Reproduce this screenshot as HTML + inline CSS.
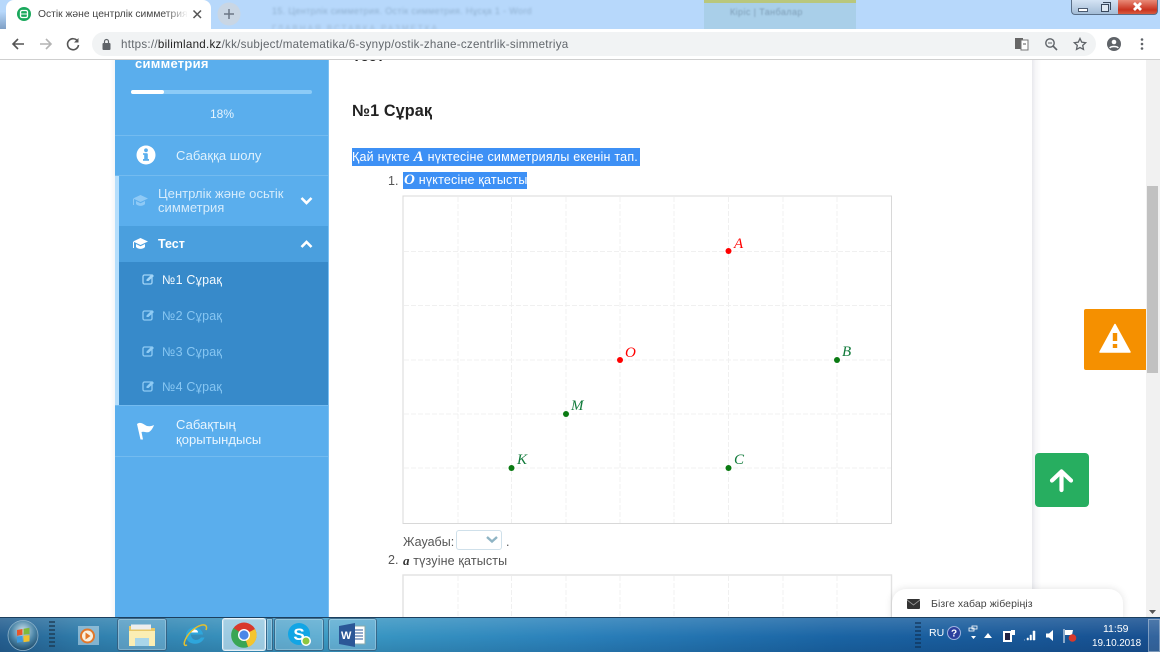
<!DOCTYPE html>
<html><head><meta charset="utf-8">
<style>
html,body{margin:0;padding:0}
body{width:1160px;height:652px;overflow:hidden;position:relative;background:#fff;font-family:"Liberation Sans",sans-serif;color:#333}
.a{position:absolute;white-space:nowrap}
.w{color:#fff}
.sb{font-size:13px;letter-spacing:.05px;line-height:14.5px}
.m{font-family:"Liberation Serif",serif;font-style:italic;font-weight:bold}
.btn{height:33px;top:618px;background:rgba(190,225,245,.3);border:1px solid rgba(20,50,80,.55);border-radius:3px;box-sizing:border-box;box-shadow:inset 0 0 0 1px rgba(255,255,255,.25)}
</style></head><body>
<!-- tab strip -->
<div class="a" style="left:0;top:0;width:1160px;height:29px;background:#b7d8fb"></div>
<div class="a" style="left:0;top:0;width:8px;height:29px;background:linear-gradient(#b7d8fb 40%,#7f9fc4)"></div>
<div class="a" style="left:272px;top:6px;font-size:9px;color:#90b0d0;filter:blur(1px);letter-spacing:.35px">15. Центрлік симметрия. Остік симметрия. Нұсқа 1 - Word</div>
<div class="a" style="left:272px;top:24px;font-size:8px;color:#9db9d6;filter:blur(1px);letter-spacing:2px">ГЛАВНАЯ ВСТАВКА РАЗМЕТКА</div>
<div class="a" style="left:704px;top:0;width:152px;height:29px;background:#a9cfe9"></div>
<div class="a" style="left:704px;top:0;width:152px;height:3px;background:#b9c77c"></div>
<div class="a" style="left:730px;top:7px;font-size:9px;letter-spacing:.4px;color:#7d9cb5;filter:blur(.9px)">Кіріс | Танбалар</div>
<div class="a" style="left:6px;top:0;width:205px;height:29px;background:#fff;border-radius:8px 8px 0 0"></div>
<svg class="a" style="left:17px;top:7px" width="14" height="14"><circle cx="7" cy="7" r="7" fill="#1aa85c"/><rect x="3.500" y="3.500" width="7" height="7" rx="1.500" fill="none" stroke="#fff" stroke-width="1.300"/><path d="M4 7h6" stroke="#fff"/></svg>
<div class="a" style="left:38px;top:8px;width:150px;overflow:hidden;font-size:10.300px;line-height:13px;color:#444;-webkit-mask-image:linear-gradient(90deg,#000 85%,transparent)">Остік және центрлік симметрия</div>
<svg class="a" style="left:192px;top:9px" width="11" height="11"><path d="M1.500 1.500l7.500 7.500M9 1.500L1.500 9" stroke="#555" stroke-width="1.500"/></svg>
<svg class="a" style="left:217px;top:2px" width="24" height="24"><circle cx="12" cy="12" r="11.500" fill="#c9d6e4"/><path d="M7 12h10M12 7v10" stroke="#6c7785" stroke-width="1.500"/></svg>
<!-- window buttons -->
<div class="a" style="left:1071px;top:0;width:48px;height:15px;background:linear-gradient(#d4e3f4,#a3bcd6);border:1px solid #5a6f88;border-top:0;border-right:0;border-radius:0 0 0 4px;box-sizing:border-box"></div>
<div class="a" style="left:1118px;top:0;width:40px;height:15px;background:linear-gradient(#e98a78,#c9331f 70%,#d85c40);border:1px solid #5a6f88;border-top:0;border-left:0;border-radius:0 0 4px 0;box-sizing:border-box"></div>
<div class="a" style="left:1078px;top:8px;width:10px;height:4px;background:#fff;border:1px solid #4a5a70;box-sizing:border-box"></div>
<div class="a" style="left:1101px;top:4px;width:8px;height:8px;border:1px solid #39485c;background:#dfe9f3;box-sizing:border-box"></div>
<div class="a" style="left:1103px;top:2px;width:8px;height:8px;border:1px solid #39485c;border-left:0;border-bottom:0;box-sizing:border-box"></div>
<svg class="a" style="left:1129px;top:1px" width="18" height="12"><path d="M5 2l7 7M12 2l-7 7" stroke="#fff" stroke-width="2.800"/></svg>
<!-- toolbar -->
<div class="a" style="left:0;top:29px;width:1160px;height:30px;background:#fff"></div>
<div class="a" style="left:0;top:59px;width:1160px;height:1px;background:#cfcfcf"></div>
<div class="a" style="left:92px;top:32px;width:1004px;height:24px;border-radius:12px;background:#f1f3f4"></div>
<svg class="a" style="left:10px;top:36px" width="16" height="16"><path d="M14 8H3M8 3L3 8l5 5" fill="none" stroke="#555" stroke-width="1.600"/></svg>
<svg class="a" style="left:38px;top:36px" width="16" height="16"><path d="M2 8h11M8 3l5 5-5 5" fill="none" stroke="#b4b4b4" stroke-width="1.600"/></svg>
<svg class="a" style="left:65px;top:36px" width="16" height="16"><path d="M12.500 5A5.500 5.500 0 1 0 13.500 9" fill="none" stroke="#555" stroke-width="1.600"/><path d="M13.500 2v4.500H9z" fill="#555"/></svg>
<svg class="a" style="left:101px;top:38px" width="12" height="13"><rect x="1.500" y="5" width="8" height="7" rx="1" fill="#5f6368"/><path d="M3.500 5V3.500a2 2 0 0 1 4 0V5" fill="none" stroke="#5f6368" stroke-width="1.200"/></svg>
<div class="a" style="left:121px;top:38px;font-size:11.600px;letter-spacing:.26px;color:#62676c">https://<span style="color:#222">bilimland.kz</span>/kk/subject/matematika/6-synyp/ostik-zhane-czentrlik-simmetriya</div>
<svg class="a" style="left:1015px;top:37px" width="14" height="14"><rect x="0" y="1" width="8" height="11" fill="#666"/><rect x="6" y="3" width="7" height="10" fill="#fff" stroke="#777"/><path d="M8 7h3" stroke="#555"/></svg>
<svg class="a" style="left:1044px;top:37px" width="14" height="14"><circle cx="6" cy="6" r="4.200" fill="none" stroke="#5f6368" stroke-width="1.400"/><path d="M9 9l4 4" stroke="#5f6368" stroke-width="1.600"/><path d="M4 6h4" stroke="#5f6368"/></svg>
<svg class="a" style="left:1073px;top:37px" width="14" height="14"><path d="M7 1.500l1.700 3.700 4 .5-3 2.700.8 4L7 10.500l-3.500 1.900.8-4-3-2.700 4-.5z" fill="none" stroke="#5f6368" stroke-width="1.300"/></svg>
<svg class="a" style="left:1107px;top:37px" width="14" height="14"><circle cx="7" cy="7" r="7" fill="#5f6368"/><circle cx="7" cy="5" r="2.300" fill="#fff"/><path d="M2.800 11c1-2 7.400-2 8.400 0" stroke="#fff" stroke-width="1.600" fill="none"/></svg>
<svg class="a" style="left:1140px;top:37px" width="4" height="14"><circle cx="2" cy="2.500" r="1.300" fill="#5f6368"/><circle cx="2" cy="7" r="1.300" fill="#5f6368"/><circle cx="2" cy="11.500" r="1.300" fill="#5f6368"/></svg>
<!-- content -->
<div class="a" style="left:329px;top:60px;width:703px;height:557px;background:#fff;overflow:hidden">
 <div class="a" style="left:23px;top:-12px;font-size:15px;font-weight:bold;color:#222">Тест</div>
</div>
<div class="a" style="left:1032px;top:60px;width:9px;height:557px;background:linear-gradient(90deg,#e8e9ed,#f6f6f8 40%,#fff)"></div>
<div class="a" style="left:110px;top:60px;width:5px;height:557px;background:linear-gradient(270deg,#f5f6f8,#fff)"></div>
<div class="a" style="left:352px;top:102px;font-size:16.200px;font-weight:bold;color:#222;letter-spacing:.1px">№1 Сұрақ</div>
<div class="a" style="left:352px;top:148px;width:288px;height:18px;background:#3d90f5"></div>
<div class="a w" style="left:352px;top:150px;font-size:12.500px;letter-spacing:.22px;line-height:15px">Қай нүкте <span class="m" style="font-size:15px">A</span> нүктесіне симметриялы екенін тап.</div>
<div class="a" style="left:388px;top:174px;font-size:12.500px;color:#555">1.</div>
<div class="a" style="left:403px;top:172px;width:124px;height:17px;background:#3d90f5"></div>
<div class="a w" style="left:404px;top:173px;font-size:12.500px;letter-spacing:.2px;line-height:15px"><span class="m" style="font-size:15px">O</span> нүктесіне қатысты</div>
<!-- grid -->
<svg class="a" style="left:402px;top:195px" width="491" height="330">
 <rect x="1" y="1" width="488.500" height="327.500" fill="#fff" stroke="#d8d8d8" stroke-width="1"/>
 <g stroke="#f0f0f0" stroke-width="1" stroke-dasharray="5 2" fill="none">
  <path d="M56 2V328M109.500 2V328M164 2V328M218 2V328M272 2V328M326.500 2V328M381 2V328M435 2V328"/>
  <path d="M2 56.500H489M2 110.500H489M2 165H489M2 219H489M2 273H489"/>
 </g>
 <circle cx="326.500" cy="56" r="3" fill="#f00"/><circle cx="218" cy="165" r="3" fill="#f00"/>
 <circle cx="435" cy="165" r="3" fill="#0a7a12"/><circle cx="164" cy="219" r="3" fill="#0a7a12"/>
 <circle cx="109.500" cy="273" r="3" fill="#0a7a12"/><circle cx="326.500" cy="273" r="3" fill="#0a7a12"/>
 <g font-family="Liberation Serif,serif" font-style="italic" font-size="15">
  <text x="332" y="53" fill="#f00">A</text><text x="223" y="162" fill="#f00">O</text>
  <g fill="#107a3a"><text x="440" y="161">B</text><text x="169" y="215">M</text><text x="115" y="269">K</text><text x="332" y="269">C</text></g>
 </g>
</svg>
<div class="a" style="left:403px;top:535px;font-size:12.500px;color:#555">Жауабы:</div>
<div class="a" style="left:456px;top:530px;width:46px;height:20px;border:1px solid #cfe0ea;border-radius:3px;box-sizing:border-box;background:#fff"></div>
<svg class="a" style="left:485px;top:535px" width="14" height="10"><path d="M2 2l5 4.500L12 2" fill="none" stroke="#8fb4c4" stroke-width="2.400"/></svg>
<div class="a" style="left:506px;top:535px;font-size:12.500px;color:#555">.</div>
<div class="a" style="left:388px;top:553px;font-size:12.500px;color:#555">2.</div>
<div class="a" style="left:403px;top:553px;font-size:12.500px;letter-spacing:.15px;color:#555"><span class="m" style="font-size:13px;color:#333">a</span> түзуіне қатысты</div>
<svg class="a" style="left:402px;top:574px" width="491" height="44">
 <rect x="1" y="1" width="488.500" height="60" fill="#fff" stroke="#e2e2e2" stroke-width="1.400"/>
 <g stroke="#f0f0f0" stroke-dasharray="5 2"><path d="M56 2V44M109.500 2V44M164 2V44M218 2V44M272 2V44M326.500 2V44M381 2V44M435 2V44"/></g>
</svg>
<!-- sidebar -->
<div class="a" style="left:115px;top:60px;width:214px;height:558px;background:#5aaeed;overflow:hidden;border-right:1px solid #7cc0f2;box-sizing:border-box">
 <div class="a w" style="left:20px;top:-4px;font-size:13px;font-weight:bold;letter-spacing:.25px">симметрия</div>
 <div class="a" style="left:16px;top:30px;width:181px;height:4px;border-radius:2px;background:#8ccbf7"></div>
 <div class="a" style="left:16px;top:30px;width:33px;height:4px;border-radius:2px;background:#fff"></div>
 <div class="a" style="left:95px;top:47px;font-size:12px;color:#e6f4fe">18%</div>
 <div class="a" style="left:0;top:75px;width:214px;height:1px;background:#73bbf0"></div>
 <svg class="a" style="left:21px;top:85px" width="20" height="20"><circle cx="10" cy="10" r="9.500" fill="#fff"/><rect x="8.200" y="8.500" width="3.600" height="7" fill="#5aaeed"/><rect x="7" y="14" width="6" height="1.800" fill="#5aaeed"/><rect x="7" y="8.200" width="4" height="1.600" fill="#5aaeed"/><circle cx="10" cy="5.300" r="1.900" fill="#5aaeed"/></svg>
 <div class="a sb" style="left:61px;top:89px;color:#dff1fd">Сабаққа шолу</div>
 <div class="a" style="left:0;top:115px;width:214px;height:1px;background:#73bbf0"></div>
 <div class="a" style="left:0;top:116px;width:4px;height:229px;background:#b5defc"></div>
 <svg class="a" style="left:17px;top:134px" width="17" height="13"><path d="M8.500 1L16 4.500 8.500 8 1 4.500z" fill="#8fcaf6"/><path d="M4 7v3c2 2.500 7 2.500 9 0V7L8.500 9.200z" fill="#8fcaf6"/><path d="M1.500 5v6" stroke="#8fcaf6"/></svg>
 <div class="a sb" style="left:43px;top:127px;line-height:14px;color:#d6ecfc">Центрлік және осьтік<br>симметрия</div>
 <svg class="a" style="left:185px;top:136px" width="13" height="10"><path d="M1.500 2l5 5 5-5" fill="none" stroke="#fff" stroke-width="2.600"/></svg>
 <div class="a" style="left:4px;top:166px;width:210px;height:36px;background:#4a9fde"></div>
 <svg class="a" style="left:17px;top:177px" width="17" height="13"><path d="M8.500 1L16 4.500 8.500 8 1 4.500z" fill="#fff"/><path d="M4 7v3c2 2.500 7 2.500 9 0V7L8.500 9.200z" fill="#fff"/><path d="M1.500 5v6" stroke="#fff"/></svg>
 <div class="a w" style="left:43px;top:177px;font-size:12.500px;font-weight:bold">Тест</div>
 <svg class="a" style="left:185px;top:179px" width="13" height="10"><path d="M1.500 8l5-5 5 5" fill="none" stroke="#fff" stroke-width="2.600"/></svg>
 <div class="a" style="left:4px;top:202px;width:210px;height:143px;background:#378aca"></div>
 <svg class="a" style="left:27px;top:213px" width="13" height="12"><rect x="1" y="2" width="9" height="9" rx="1.500" fill="none" stroke="#a3d5f7" stroke-width="1.300"/><path d="M4.500 8V6.500L10 1l2 2-5.500 5z" fill="#a3d5f7"/></svg>
 <div class="a" style="left:47px;top:213px;font-size:12.500px;letter-spacing:.2px;color:#f2f9fe">№1 Сұрақ</div>
 <svg class="a" style="left:27px;top:249px" width="13" height="12"><rect x="1" y="2" width="9" height="9" rx="1.500" fill="none" stroke="#8fcbf4" stroke-width="1.300"/><path d="M4.500 8V6.500L10 1l2 2-5.500 5z" fill="#8fcbf4"/></svg>
 <div class="a" style="left:47px;top:249px;font-size:12.500px;letter-spacing:.2px;color:#87c6f2">№2 Сұрақ</div>
 <svg class="a" style="left:27px;top:285px" width="13" height="12"><rect x="1" y="2" width="9" height="9" rx="1.500" fill="none" stroke="#8fcbf4" stroke-width="1.300"/><path d="M4.500 8V6.500L10 1l2 2-5.500 5z" fill="#8fcbf4"/></svg>
 <div class="a" style="left:47px;top:285px;font-size:12.500px;letter-spacing:.2px;color:#87c6f2">№3 Сұрақ</div>
 <svg class="a" style="left:27px;top:320px" width="13" height="12"><rect x="1" y="2" width="9" height="9" rx="1.500" fill="none" stroke="#8fcbf4" stroke-width="1.300"/><path d="M4.500 8V6.500L10 1l2 2-5.500 5z" fill="#8fcbf4"/></svg>
 <div class="a" style="left:47px;top:320px;font-size:12.500px;letter-spacing:.2px;color:#87c6f2">№4 Сұрақ</div>
 <div class="a" style="left:0;top:345px;width:214px;height:1px;background:#73bbf0"></div>
 <svg class="a" style="left:21px;top:361px" width="20" height="20"><path d="M1 3c4-3 7 1 10 2 3 .5 5 0 7-1-1 3-3 6-5 7-3 1-5-1-7.500 0L7 18.500H4.500z" fill="#fff"/></svg>
 <div class="a sb" style="left:61px;top:357px;line-height:15px;color:#e8f5fe">Сабақтың<br>қорытындысы</div>
 <div class="a" style="left:0;top:396px;width:214px;height:1px;background:#73bbf0"></div>
</div>
<!-- scrollbar -->
<div class="a" style="left:1146px;top:60px;width:14px;height:557px;background:#f1f1f1"></div>
<div class="a" style="left:1147px;top:186px;width:11px;height:187px;background:#c1c1c1"></div>
<svg class="a" style="left:1149px;top:609px" width="8" height="6"><path d="M0 1h7L3.500 5z" fill="#555"/></svg>
<!-- floating buttons -->
<div class="a" style="left:1084px;top:309px;width:62px;height:61px;background:#f59000;border-radius:2px 0 0 2px"></div>
<svg class="a" style="left:1098px;top:322px" width="34" height="33"><path d="M17 2.500L32 30H2z" fill="#fff" stroke="#fff" stroke-width="1.500" stroke-linejoin="round"/><rect x="14.800" y="11" width="4.400" height="8" fill="#f59000"/><rect x="14.800" y="22" width="4.400" height="4" fill="#f59000"/></svg>
<div class="a" style="left:1035px;top:453px;width:54px;height:54px;background:#27ae60;border-radius:4px"></div>
<svg class="a" style="left:1049px;top:468px" width="26" height="26"><path d="M3 12.500l9.500-9 9.500 9M12.500 5v17" fill="none" stroke="#fff" stroke-width="4.200" stroke-linecap="round" stroke-linejoin="round"/></svg>
<!-- chat -->
<div class="a" style="left:892px;top:589px;width:231px;height:30px;background:#fff;border-radius:14px 14px 0 0;box-shadow:0 0 8px rgba(0,0,0,.12)"></div>
<svg class="a" style="left:907px;top:599px" width="13" height="10"><rect width="13" height="10" rx="1" fill="#333"/><path d="M0 1l6.500 5L13 1" fill="none" stroke="#999" stroke-width=".8"/></svg>
<div class="a" style="left:931px;top:598px;font-size:10.500px;letter-spacing:.08px;color:#444">Бізге хабар жіберіңіз</div>
<!-- taskbar -->
<div class="a" style="left:0;top:617px;width:1160px;height:35px;background:linear-gradient(90deg,#255f90 0,#3080ae 8%,#3b9ac4 28%,#2a80ba 50%,#1a64a4 72%,#174f90 100%);border-top:1px solid #1c3f5e;box-sizing:border-box"></div>
<div class="a" style="left:0;top:618px;width:1160px;height:34px;background:linear-gradient(rgba(255,255,255,.14),rgba(255,255,255,0) 55%,rgba(0,20,50,.12))"></div>
<svg class="a" style="left:7px;top:620px" width="32" height="32">
 <defs><radialGradient id="orb" cx=".5" cy=".35" r=".7"><stop offset="0" stop-color="#cfe4ee"/><stop offset=".55" stop-color="#4c86a8"/><stop offset="1" stop-color="#16405f"/></radialGradient></defs>
 <circle cx="16" cy="15.500" r="15" fill="url(#orb)" stroke="#8fb4cc" stroke-width=".8"/><path d="M10 10l5.500-1v5.800l-5.500 1z" fill="#e8562a"/><path d="M16.500 8.700l6-1v6.300l-6 .7z" fill="#7fb93a"/><path d="M10 16.800l5.500-.9v5.800l-5.500 1z" fill="#3d9ae0"/><path d="M16.500 15.800l6-.7v6.300l-6 .7z" fill="#f0c22c"/></svg>
<div class="a" style="left:49px;top:621px;width:6px;height:26px;background:repeating-linear-gradient(#1c3a52 0 2px,transparent 2px 4px);opacity:.7"></div>
<div class="a" style="left:78px;top:626px;width:21px;height:19px;background:rgba(200,225,240,.55)"></div>
<svg class="a" style="left:79px;top:627px" width="18" height="18"><circle cx="8.500" cy="9" r="7.500" fill="#e2772a"/><circle cx="8.500" cy="9" r="5.500" fill="#f8f0e0"/><path d="M6.500 5.500l5 3.500-5 3.500z" fill="#e2772a"/></svg>
<div class="a btn" style="left:117px;width:50px"></div>
<svg class="a" style="left:127px;top:623px" width="30" height="25"><path d="M2 3h10l2 2h14v18H2z" fill="#e8c868"/><rect x="4" y="1.500" width="20" height="5" fill="#eee"/><path d="M2 8h26v15H2z" fill="#fbeeb4"/><path d="M8 15h14v8H8z" fill="#a9d6ea"/></svg>
<svg class="a" style="left:181px;top:622px" width="28" height="26"><path d="M5 14a8.500 8 0 0 1 17-1.500H10c0 6 7 7 10 3h3.500C20 25 5 23 5 14z" fill="#2ea6dc"/><path d="M9 10.500h8c0-4-7-4-8 0z" fill="#fff"/><path d="M6 23C0 26 4 12 16 5c7-4 11-2 9 3" fill="none" stroke="#e5c02e" stroke-width="1.500"/></svg>
<div class="a btn" style="left:222px;width:44px;background:rgba(225,242,250,.6);border-color:rgba(255,255,255,.75)"></div>
<div class="a btn" style="left:266px;width:7px;border-radius:1px"></div>
<svg class="a" style="left:231px;top:622px" width="26" height="26" viewBox="0 0 26 26"><circle cx="13" cy="13" r="12.500" fill="#d8392c"/><path d="M13 13L24 7a12.500 12.500 0 0 1-7 18z" fill="#f3c52f"/><path d="M13 13l4 12A12.500 12.500 0 0 1 2.500 6z" fill="#3aa655"/><circle cx="13" cy="13" r="6" fill="#fff"/><circle cx="13" cy="13" r="4.600" fill="#4a86e8"/></svg>
<div class="a btn" style="left:274px;width:50px"></div>
<svg class="a" style="left:287px;top:622px" width="26" height="26"><circle cx="12" cy="12" r="11" fill="#12a5e5"/><text x="12" y="18" text-anchor="middle" font-family="Liberation Sans" font-weight="bold" font-size="17" fill="#fff">S</text><circle cx="19" cy="19" r="5" fill="#fff"/><circle cx="19" cy="19" r="3.500" fill="#8dc63f"/></svg>
<div class="a btn" style="left:328px;width:49px"></div>
<svg class="a" style="left:339px;top:623px" width="27" height="24"><rect x="12" y="3" width="14" height="18" fill="#fff" stroke="#8aa"/><path d="M15 7h9M15 10h9M15 13h9M15 16h9" stroke="#2b5797"/><path d="M0 3l16-3v24L0 21z" fill="#2b5797"/><text x="2" y="16" font-family="Liberation Sans" font-weight="bold" font-size="11" fill="#fff">W</text></svg>
<!-- tray -->
<div class="a" style="left:915px;top:622px;width:6px;height:26px;background:repeating-linear-gradient(#0f2f52 0 2px,transparent 2px 4px);opacity:.6"></div>
<div class="a w" style="left:929px;top:627px;font-size:10.500px">RU</div>
<svg class="a" style="left:947px;top:626px" width="14" height="14"><circle cx="7" cy="7" r="6.500" fill="#2c3f9e" stroke="#9fb4e0"/><text x="7" y="10.500" text-anchor="middle" font-size="10" font-weight="bold" font-family="Liberation Sans" fill="#fff">?</text></svg>
<svg class="a" style="left:968px;top:625px" width="10" height="16"><rect x="1" y="3" width="5" height="3" fill="none" stroke="#fff" stroke-width=".8"/><rect x="4" y="1" width="5" height="3" fill="none" stroke="#fff" stroke-width=".8"/><path d="M3 11h5l-2.500 3z" fill="#fff"/></svg>
<svg class="a" style="left:984px;top:633px" width="8" height="6"><path d="M0 5h8L4 0z" fill="#fff"/></svg>
<svg class="a" style="left:1002px;top:629px" width="14" height="14"><rect x="1" y="2" width="9" height="11" fill="#fff"/><rect x="3" y="4" width="5" height="7" fill="#224"/><path d="M9 1h4v5H9z" fill="#fff"/></svg>
<svg class="a" style="left:1023px;top:630px" width="13" height="11"><path d="M1 10h1M4 8h1.500v2H4zM7 5h1.500v5H7zM10 1h2v9h-2z" fill="#fff" stroke="#fff" stroke-width=".5"/></svg>
<svg class="a" style="left:1045px;top:629px" width="12" height="13"><path d="M1 4.500h3L8 1v11L4 8.500H1z" fill="#fff"/></svg>
<svg class="a" style="left:1063px;top:628px" width="14" height="15"><path d="M1 1v14" stroke="#fff"/><path d="M2 2h8l-1 5H2z" fill="#fff"/><circle cx="9.500" cy="10" r="3.800" fill="#d8392c"/></svg>
<div class="a w" style="left:1103px;top:623px;font-size:10.500px">11:59</div>
<div class="a w" style="left:1092px;top:639px;font-size:10px;line-height:10px;letter-spacing:-.1px">19.10.2018</div>
<div class="a" style="left:1148px;top:619px;width:12px;height:33px;background:rgba(255,255,255,.12);border:1px solid rgba(255,255,255,.35);box-sizing:border-box"></div>
</body></html>
